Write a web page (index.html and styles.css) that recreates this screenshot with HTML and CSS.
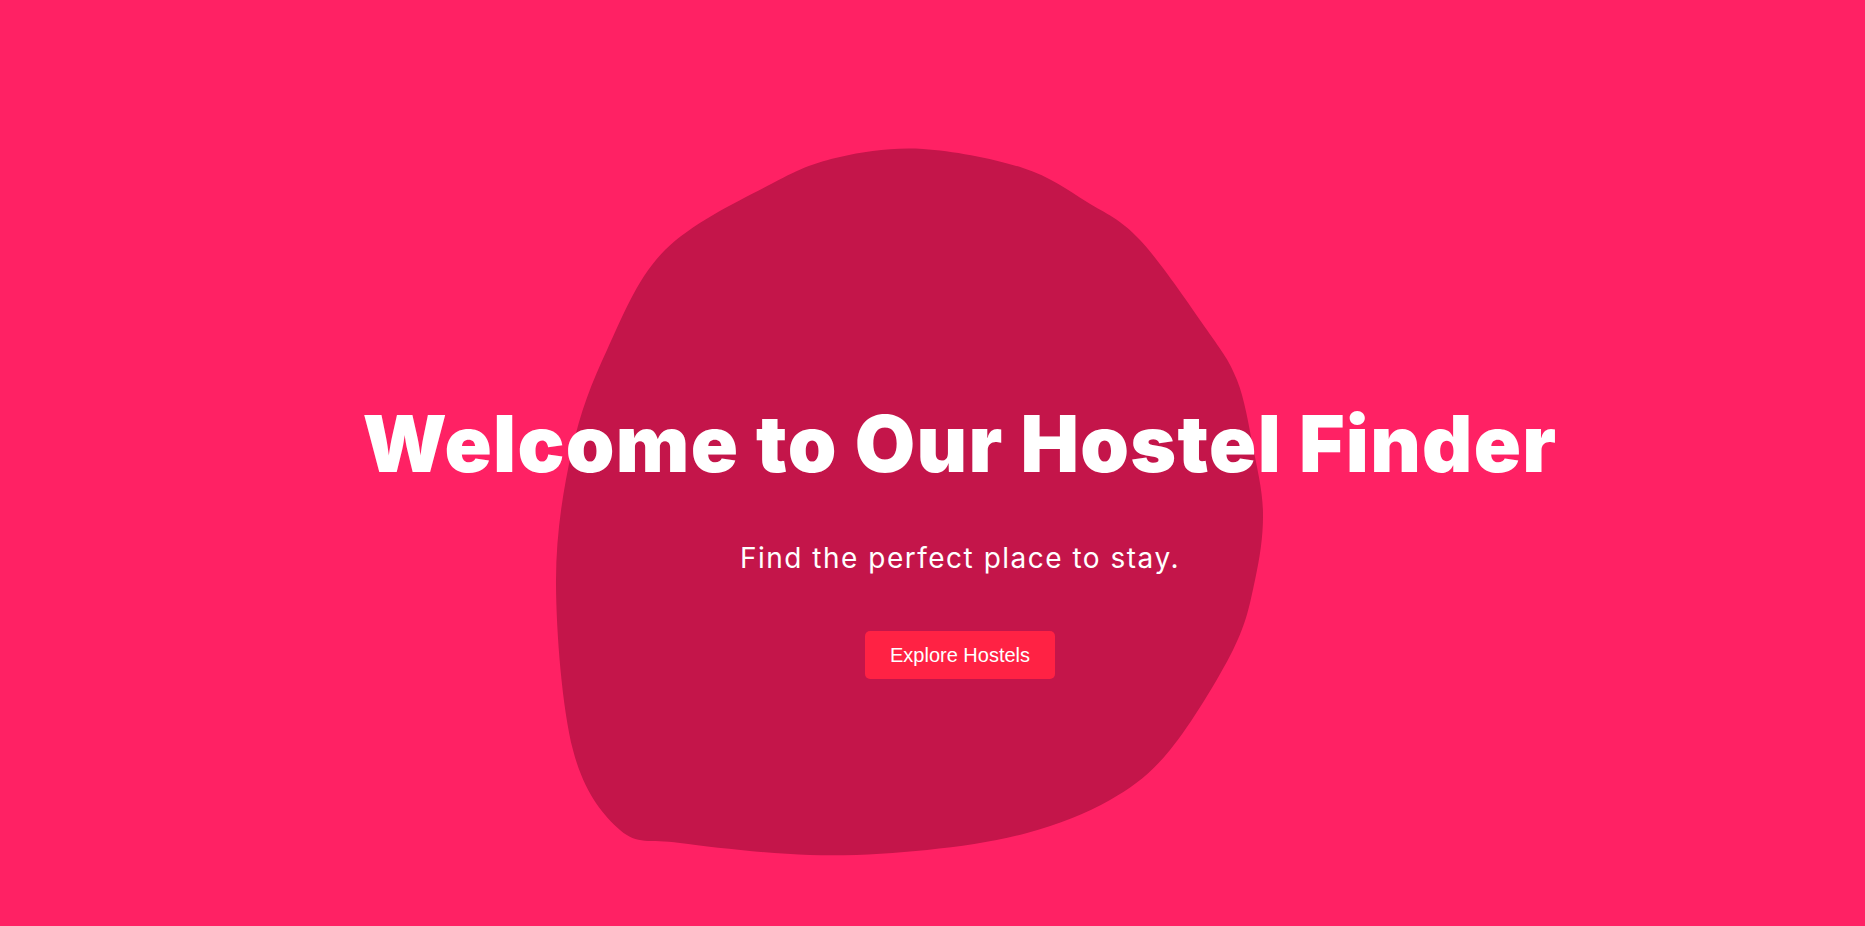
FILE: index.html
```html
<!DOCTYPE html>
<html lang="en">
<head>
<meta charset="utf-8">
<title>Hostel Finder</title>
<link rel="stylesheet" href="styles.css">
</head>
<body>
<section class="hero">
  <svg class="blob" viewBox="0 0 1865 926" preserveAspectRatio="none" aria-hidden="true">
    <path d="M 923 149 C 953.5 150.8 995.7 159.2 1023 168 C 1050.3 176.8 1067.5 190 1087 202 C 1106.5 214 1120 218.7 1140 240 C 1160 261.3 1190.8 306.7 1207 330 C 1223.2 353.3 1229.3 360.5 1237 380 C 1244.7 399.5 1248.7 424.8 1253 447 C 1257.3 469.2 1262.7 490.8 1263 513 C 1263.3 535.2 1260 557.2 1255 580 C 1250 602.8 1247.2 621.7 1233 650 C 1218.8 678.3 1190.5 725 1170 750 C 1149.5 775 1133.8 786.2 1110 800 C 1086.2 813.8 1057.5 824.7 1027 833 C 996.5 841.3 963.2 846.3 927 850 C 890.8 853.7 851.2 856.2 810 855 C 768.8 853.8 711.7 847.2 680 843 C 648.3 838.8 637.8 845.5 620 830 C 602.2 814.5 583.7 791.2 573 750 C 562.3 708.8 556.2 633 556 583 C 555.8 533 563.5 488.8 572 450 C 580.5 411.2 591.5 383.3 607 350 C 622.5 316.7 637.3 277.8 665 250 C 692.7 222.2 743.8 198.5 773 183 C 802.2 167.5 815 162.7 840 157 C 865 151.3 892.5 147.2 923 149 Z"/>
  </svg>
  <div class="content">
    <h1 class="title">Welcome to Our Hostel Finder</h1>
    <p class="subtitle">Find the perfect place to stay.</p>
    <a class="btn" href="#">Explore Hostels</a>
  </div>
</section>
</body>
</html>
```

FILE: styles.css
```css
html, body {
  margin: 0;
  padding: 0;
}

body {
  background: #ff2164;
  overflow: hidden;
}

.hero {
  position: relative;
  height: 926px;
  box-sizing: border-box;
  padding-top: 158px;
  padding-left: 55px;
  display: flex;
  flex-direction: column;
  align-items: center;
  justify-content: center;
}

.blob {
  position: absolute;
  top: 0;
  left: 0;
  width: 100%;
  height: 100%;
  z-index: 0;
}

.blob path {
  fill: #c4154a;
}

.content {
  position: relative;
  z-index: 1;
  display: flex;
  flex-direction: column;
  align-items: center;
  text-align: center;
  color: #ffffff;
}

.title {
  margin: 0;
  font-family: "Inter", "Liberation Sans", sans-serif;
  font-weight: 900;
  font-size: 78px;
  line-height: 1;
  letter-spacing: 1.3px;
  white-space: nowrap;
}

.subtitle {
  margin: 59px 0 0;
  font-family: "Inter", "Liberation Sans", sans-serif;
  font-weight: 400;
  font-size: 28px;
  line-height: 1.2;
  letter-spacing: 1.5px;
}

.btn {
  margin-top: 56px;
  display: inline-block;
  box-sizing: border-box;
  height: 48px;
  padding: 12px 25px;
  border-radius: 5px;
  background: #ff2244;
  color: #ffffff;
  text-decoration: none;
  font-family: "Liberation Sans", Arial, sans-serif;
  font-size: 20px;
  line-height: 24px;
}
```
